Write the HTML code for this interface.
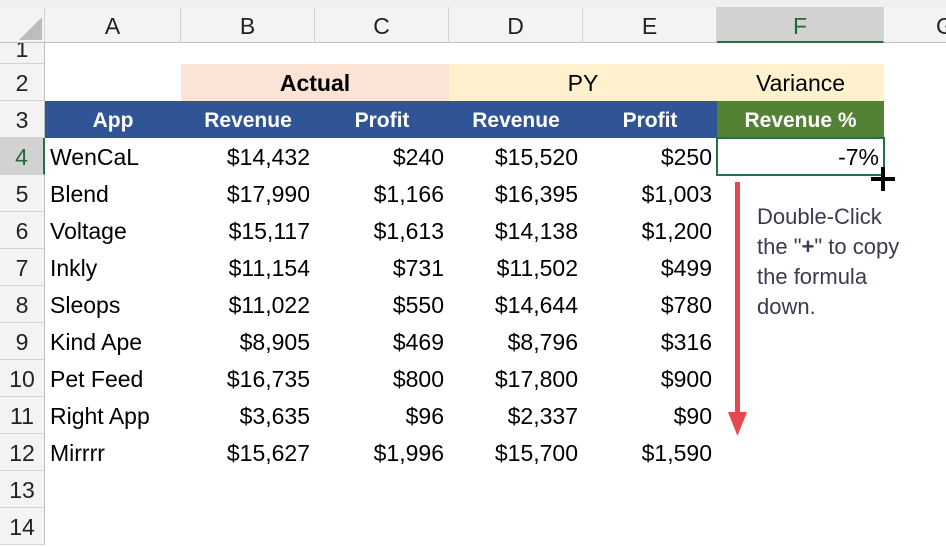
<!DOCTYPE html>
<html><head><meta charset="utf-8"><style>
*{margin:0;padding:0;box-sizing:border-box}
body{width:946px;height:527px;overflow:hidden;background:#fff;font-family:"Liberation Sans",sans-serif;position:relative;color:#000}
.a{position:absolute;white-space:nowrap}
.ch{top:7px;height:36px;font-size:23px;line-height:38px;text-align:center;background:#f3f3f3;border-right:1px solid #d4d4d4;border-bottom:1px solid #bfbfbf;color:#222}
.rh{left:0;width:45px;height:37px;font-size:23px;line-height:39px;text-align:center;background:#f3f3f3;border-bottom:1px solid #d4d4d4;border-right:1px solid #bfbfbf;color:#222}
.c{font-size:23px;height:37px;line-height:39px}
.r{text-align:right}
.hd{color:#fff;font-weight:bold;font-size:21px;text-align:center;line-height:39px}
</style></head><body>
<div class="a" style="left:0;top:0;width:946px;height:7px;background:#f0f0f0"></div>
<div class="a ch" style="left:0;width:45px"><svg width="45" height="36" style="position:absolute;left:0;top:0"><polygon points="42,33 42,10 19,33" fill="#bdbdbd"/></svg></div>
<div class="a ch" style="left:45px;width:136px">A</div>
<div class="a ch" style="left:181px;width:134px">B</div>
<div class="a ch" style="left:315px;width:134px">C</div>
<div class="a ch" style="left:449px;width:134px">D</div>
<div class="a ch" style="left:583px;width:134px">E</div>
<div class="a ch" style="left:717px;width:167px;background:#d2d2d2;color:#1e6b3a;border-bottom:2px solid #217346">F</div>
<div class="a ch" style="left:884px;width:62px;border-right:none;text-align:left;padding-left:52px;overflow:hidden">G</div>

<div class="a rh" style="top:43px;height:21px;line-height:12px;overflow:hidden">1</div>
<div class="a rh" style="top:64px">2</div>
<div class="a rh" style="top:101px">3</div>
<div class="a rh" style="top:138px;background:#d2d2d2;color:#1e6b3a;border-right:2px solid #217346">4</div>
<div class="a rh" style="top:175px">5</div>
<div class="a rh" style="top:212px">6</div>
<div class="a rh" style="top:249px">7</div>
<div class="a rh" style="top:286px">8</div>
<div class="a rh" style="top:323px">9</div>
<div class="a rh" style="top:360px">10</div>
<div class="a rh" style="top:397px">11</div>
<div class="a rh" style="top:434px">12</div>
<div class="a rh" style="top:471px">13</div>
<div class="a rh" style="top:508px">14</div>

<div class="a" style="left:181px;top:64px;width:268px;height:37px;background:#fbe3d6;font-weight:bold;font-size:23px;line-height:39px;text-align:center">Actual</div>
<div class="a" style="left:449px;top:64px;width:268px;height:37px;background:#fff1cd;font-size:23px;line-height:39px;text-align:center">PY</div>
<div class="a" style="left:717px;top:64px;width:167px;height:37px;background:#fff1cd;font-size:23px;line-height:39px;text-align:center">Variance</div>

<div class="a" style="left:45px;top:101px;width:672px;height:37px;background:#2f5597"></div>
<div class="a" style="left:717px;top:101px;width:167px;height:37px;background:#548235"></div>
<div class="a hd" style="left:45px;top:101px;width:136px">App</div>
<div class="a hd" style="left:181px;top:101px;width:134px">Revenue</div>
<div class="a hd" style="left:315px;top:101px;width:134px">Profit</div>
<div class="a hd" style="left:449px;top:101px;width:134px">Revenue</div>
<div class="a hd" style="left:583px;top:101px;width:134px">Profit</div>
<div class="a hd" style="left:717px;top:101px;width:167px">Revenue %</div>

<div class="a" style="left:716px;top:137px;width:169px;height:39px;border:2px solid #217346"></div>
<div class="a c r" style="left:717px;top:138px;width:162px">-7%</div>
<svg class="a" style="left:868px;top:166px" width="30" height="26"><rect x="13" y="1" width="4" height="24" fill="#000"/><rect x="3" y="11" width="24" height="4" fill="#000"/></svg>

<div class="a c" style="left:50px;top:138px">WenCaL</div>
<div class="a c" style="left:50px;top:175px">Blend</div>
<div class="a c" style="left:50px;top:212px">Voltage</div>
<div class="a c" style="left:50px;top:249px">Inkly</div>
<div class="a c" style="left:50px;top:286px">Sleops</div>
<div class="a c" style="left:50px;top:323px">Kind Ape</div>
<div class="a c" style="left:50px;top:360px">Pet Feed</div>
<div class="a c" style="left:50px;top:397px">Right App</div>
<div class="a c" style="left:50px;top:434px">Mirrrr</div>

<div class="a c r" style="left:181px;top:138px;width:129px">$14,432</div>
<div class="a c r" style="left:181px;top:175px;width:129px">$17,990</div>
<div class="a c r" style="left:181px;top:212px;width:129px">$15,117</div>
<div class="a c r" style="left:181px;top:249px;width:129px">$11,154</div>
<div class="a c r" style="left:181px;top:286px;width:129px">$11,022</div>
<div class="a c r" style="left:181px;top:323px;width:129px">$8,905</div>
<div class="a c r" style="left:181px;top:360px;width:129px">$16,735</div>
<div class="a c r" style="left:181px;top:397px;width:129px">$3,635</div>
<div class="a c r" style="left:181px;top:434px;width:129px">$15,627</div>

<div class="a c r" style="left:315px;top:138px;width:129px">$240</div>
<div class="a c r" style="left:315px;top:175px;width:129px">$1,166</div>
<div class="a c r" style="left:315px;top:212px;width:129px">$1,613</div>
<div class="a c r" style="left:315px;top:249px;width:129px">$731</div>
<div class="a c r" style="left:315px;top:286px;width:129px">$550</div>
<div class="a c r" style="left:315px;top:323px;width:129px">$469</div>
<div class="a c r" style="left:315px;top:360px;width:129px">$800</div>
<div class="a c r" style="left:315px;top:397px;width:129px">$96</div>
<div class="a c r" style="left:315px;top:434px;width:129px">$1,996</div>

<div class="a c r" style="left:449px;top:138px;width:129px">$15,520</div>
<div class="a c r" style="left:449px;top:175px;width:129px">$16,395</div>
<div class="a c r" style="left:449px;top:212px;width:129px">$14,138</div>
<div class="a c r" style="left:449px;top:249px;width:129px">$11,502</div>
<div class="a c r" style="left:449px;top:286px;width:129px">$14,644</div>
<div class="a c r" style="left:449px;top:323px;width:129px">$8,796</div>
<div class="a c r" style="left:449px;top:360px;width:129px">$17,800</div>
<div class="a c r" style="left:449px;top:397px;width:129px">$2,337</div>
<div class="a c r" style="left:449px;top:434px;width:129px">$15,700</div>

<div class="a c r" style="left:583px;top:138px;width:129px">$250</div>
<div class="a c r" style="left:583px;top:175px;width:129px">$1,003</div>
<div class="a c r" style="left:583px;top:212px;width:129px">$1,200</div>
<div class="a c r" style="left:583px;top:249px;width:129px">$499</div>
<div class="a c r" style="left:583px;top:286px;width:129px">$780</div>
<div class="a c r" style="left:583px;top:323px;width:129px">$316</div>
<div class="a c r" style="left:583px;top:360px;width:129px">$900</div>
<div class="a c r" style="left:583px;top:397px;width:129px">$90</div>
<div class="a c r" style="left:583px;top:434px;width:129px">$1,590</div>

<svg class="a" style="left:727px;top:180px" width="22" height="260"><rect x="8" y="2" width="5" height="232" fill="#e5484d"/><polygon points="1,232 20,232 10.5,256" fill="#e5484d"/></svg>
<div class="a" style="left:757px;top:202px;font-size:22px;line-height:30px;color:#3a3b4d;white-space:normal;width:189px">Double-Click<br>the "<b>+</b>" to copy<br>the formula<br>down.</div>
</body></html>
